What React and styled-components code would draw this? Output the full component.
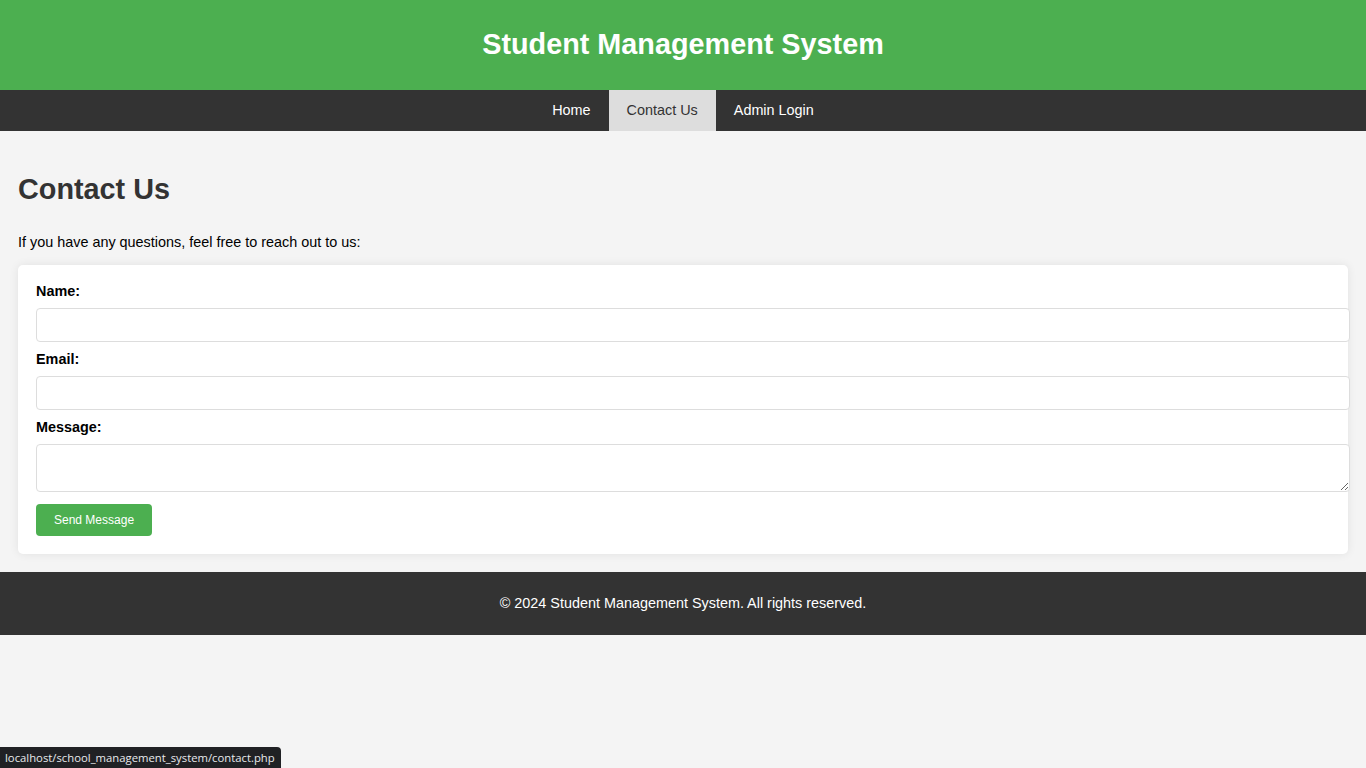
import React from "react";
import styled, { createGlobalStyle } from "styled-components";

const GlobalStyle = createGlobalStyle`
  html, body {
    margin: 0;
    padding: 0;
    background: #f4f4f4;
    font-family: "Liberation Sans", Arial, sans-serif;
    font-size: 14.4px;
    color: #000;
  }
`;

const Header = styled.header`
  background: #4caf50;
  color: #fff;
  text-align: center;
  padding: 27px 0 29px;
`;

const Title = styled.h1`
  margin: 0;
  font-size: 28.8px;
  line-height: 34px;
  font-weight: bold;
`;

const Nav = styled.nav`
  background: #333;
  display: flex;
  justify-content: center;
`;

const NavLink = styled.a`
  display: block;
  padding: 12px 18px;
  line-height: 17px;
  font-size: 14.4px;
  text-decoration: none;
  color: ${(p) => (p.$active ? "#333" : "#fff")};
  background: ${(p) => (p.$active ? "#ddd" : "transparent")};
`;

const Main = styled.main`
  padding: 18px;
`;

const Heading = styled.h2`
  margin: 24px 0 28px;
  font-size: 28.8px;
  line-height: 33px;
  color: #333;
`;

const Intro = styled.p`
  margin: 0 0 14px;
  line-height: 17px;
`;

const Card = styled.form`
  background: #fff;
  padding: 18px;
  border-radius: 5px;
  box-shadow: 0 0 10px rgba(0, 0, 0, 0.08);
`;

const Label = styled.label`
  display: block;
  font-weight: bold;
  line-height: 17px;
  margin-bottom: 8px;
`;

const Field = styled.input`
  display: block;
  box-sizing: border-box;
  width: calc(100% + 20px);
  height: 34px;
  padding: 8px;
  margin: 0 0 9px;
  border: 1px solid #ddd;
  border-radius: 4px;
  background: #fff;
  font-family: inherit;
  font-size: 14.4px;
`;

const Area = styled(Field).attrs({ as: "textarea" })`
  height: 48px;
  margin-bottom: 12px;
  resize: vertical;
`;

const SendButton = styled.button`
  display: block;
  background: #4caf50;
  color: #fff;
  border: none;
  border-radius: 4px;
  padding: 9px 18px;
  font-family: inherit;
  font-size: 12px;
  line-height: 14px;
  cursor: pointer;
`;

const Footer = styled.footer`
  background: #333;
  color: #fff;
  text-align: center;
  padding: 23px 0;
  line-height: 17px;
`;

const StatusBubble = styled.div`
  position: fixed;
  left: 0;
  bottom: 0;
  background: #202124;
  color: #e8eaed;
  font-family: "Open Sans", "Noto Sans", sans-serif;
  font-size: 11.3px;
  line-height: 21px;
  padding: 0 6px 0 5px;
  border-top-right-radius: 4px;
`;

export default function App() {
  return (
    <>
      <GlobalStyle />
      <Header>
        <Title>Student Management System</Title>
      </Header>
      <Nav>
        <NavLink href="#">Home</NavLink>
        <NavLink href="#" $active>
          Contact Us
        </NavLink>
        <NavLink href="#">Admin Login</NavLink>
      </Nav>
      <Main>
        <Heading>Contact Us</Heading>
        <Intro>If you have any questions, feel free to reach out to us:</Intro>
        <Card onSubmit={(e) => e.preventDefault()}>
          <Label htmlFor="name">Name:</Label>
          <Field id="name" type="text" />
          <Label htmlFor="email">Email:</Label>
          <Field id="email" type="email" />
          <Label htmlFor="message">Message:</Label>
          <Area id="message" />
          <SendButton type="submit">Send Message</SendButton>
        </Card>
      </Main>
      <Footer>© 2024 Student Management System. All rights reserved.</Footer>
      <StatusBubble>localhost/school_management_system/contact.php</StatusBubble>
    </>
  );
}
